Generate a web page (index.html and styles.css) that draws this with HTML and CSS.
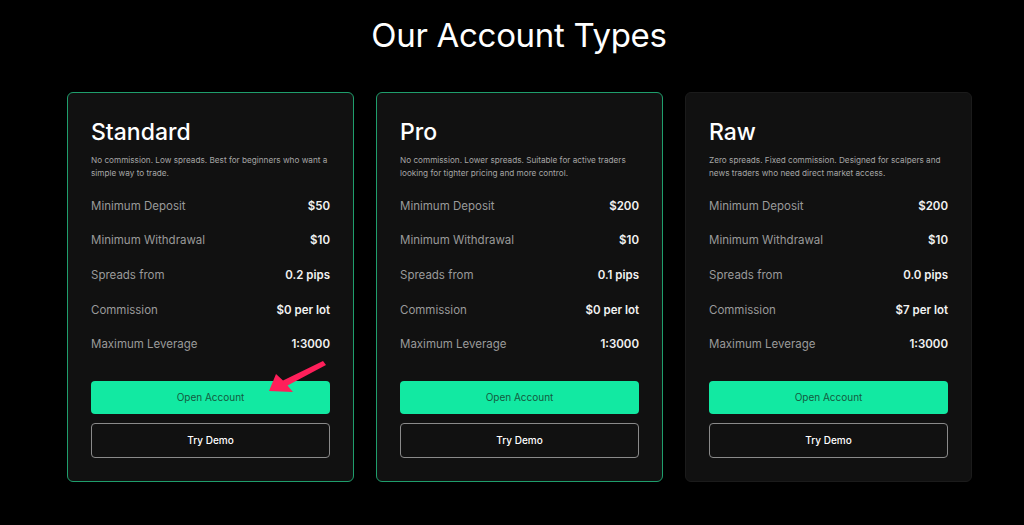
FILE: index.html
```html
<!DOCTYPE html>
<html lang="en">
<head>
    <meta charset="UTF-8">
    <title>Our Account Types</title>
    <link rel="stylesheet" href="styles.css">
</head>
<body>
<div class="page">
    <h1 class="title">Our Account Types</h1>
    <div class="cards">
        <div class="card card-hl">
            <h2 class="card-name">Standard</h2>
            <p class="card-desc">No commission. Low spreads. Best for beginners who want a simple way to trade.</p>
            <ul class="specs">
                <li><span>Minimum Deposit</span><b>$50</b></li>
                <li><span>Minimum Withdrawal</span><b>$10</b></li>
                <li><span>Spreads from</span><b>0.2 pips</b></li>
                <li><span>Commission</span><b>$0 per lot</b></li>
                <li><span>Maximum Leverage</span><b>1:3000</b></li>
            </ul>
            <div class="btns">
                <a class="btn btn-open">Open Account</a>
                <a class="btn btn-demo">Try Demo</a>
                <svg class="arrow" width="66" height="36" viewBox="0 0 66 36">
                    <path d="M3 31 L10 14 L17 20.5 L57 1 L60 5 L21.5 25.5 L27 32 Z" fill="#ff1f5a"/>
                </svg>
            </div>
        </div>
        <div class="card card-hl">
            <h2 class="card-name">Pro</h2>
            <p class="card-desc">No commission. Lower spreads. Suitable for active traders looking for tighter pricing and more control.</p>
            <ul class="specs">
                <li><span>Minimum Deposit</span><b>$200</b></li>
                <li><span>Minimum Withdrawal</span><b>$10</b></li>
                <li><span>Spreads from</span><b>0.1 pips</b></li>
                <li><span>Commission</span><b>$0 per lot</b></li>
                <li><span>Maximum Leverage</span><b>1:3000</b></li>
            </ul>
            <div class="btns">
                <a class="btn btn-open">Open Account</a>
                <a class="btn btn-demo">Try Demo</a>
            </div>
        </div>
        <div class="card">
            <h2 class="card-name">Raw</h2>
            <p class="card-desc">Zero spreads. Fixed commission. Designed for scalpers and news traders who need direct market access.</p>
            <ul class="specs">
                <li><span>Minimum Deposit</span><b>$200</b></li>
                <li><span>Minimum Withdrawal</span><b>$10</b></li>
                <li><span>Spreads from</span><b>0.0 pips</b></li>
                <li><span>Commission</span><b>$7 per lot</b></li>
                <li><span>Maximum Leverage</span><b>1:3000</b></li>
            </ul>
            <div class="btns">
                <a class="btn btn-open">Open Account</a>
                <a class="btn btn-demo">Try Demo</a>
            </div>
        </div>
    </div>
</div>
</body>
</html>
```

FILE: styles.css
```css
html, body{
    margin: 0;
    padding: 0;
    background: #000;
}
body{
    font-family: Inter, "Noto Sans", sans-serif;
    color: #fff;
}
.page{
    width: 1024px;
    height: 525px;
    overflow: hidden;
}
.title{
    margin: 0;
    padding: 13px 0 0 14px;
    height: 92px;
    box-sizing: border-box;
    text-align: center;
    font-size: 33px;
    font-weight: 400;
    line-height: 44px;
    letter-spacing: -0.3px;
}
.cards{
    display: flex;
    gap: 22px;
    padding-left: 67px;
}
.card{
    width: 287px;
    height: 390px;
    box-sizing: border-box;
    padding: 24px 23px 23px 23px;
    background: #111;
    border: 1px solid #1b1b1b;
    border-radius: 6px;
    display: flex;
    flex-direction: column;
}
.card-hl{
    border-color: #1f9e6c;
}
.card-name{
    margin: 0;
    font-size: 23px;
    font-weight: 500;
    line-height: 30px;
}
.card-desc{
    margin: 7px 0 0 0;
    font-size: 8.2px;
    line-height: 13px;
    color: #a6a6a6;
}
.specs{
    margin: 8.5px 0 0 0;
    padding: 0;
    list-style: none;
}
.specs li{
    display: flex;
    justify-content: space-between;
    align-items: center;
    height: 34.6px;
    font-size: 11.5px;
}
.specs span{
    color: #9a9a9a;
}
.specs b{
    font-weight: 600;
    color: #f2f2f2;
}
.btns{
    margin-top: auto;
    display: flex;
    flex-direction: column;
    gap: 9px;
    position: relative;
}
.btn{
    display: block;
    box-sizing: border-box;
    text-align: center;
    font-size: 10px;
    border-radius: 4px;
}
.btn-open{
    height: 33px;
    line-height: 33px;
    background: #12e9a2;
    color: #145a40;
}
.btn-demo{
    height: 35px;
    line-height: 33px;
    border: 1px solid #8a8a8a;
    color: #fff;
    font-weight: 500;
}
.arrow{
    position: absolute;
    left: 175px;
    top: -21px;
}
```
